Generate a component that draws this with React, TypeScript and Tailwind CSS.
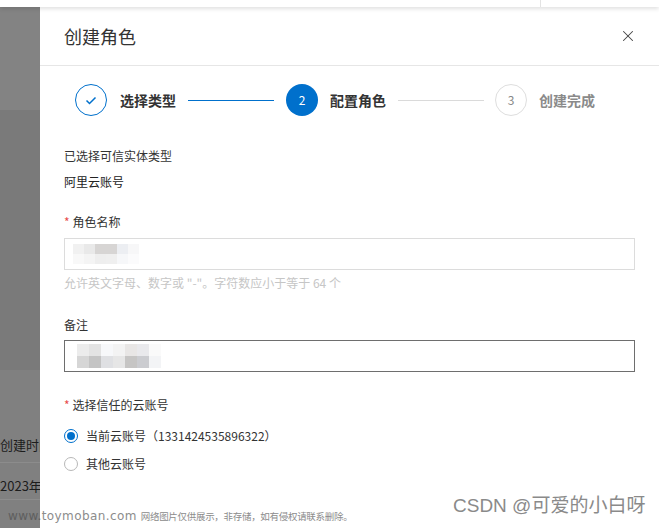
import { X } from "lucide-react";

const mosaicName = [
  ["#f1f1f1", "#e9e9e9", "#d7d5d4", "#d7d5d4", "#eceef2", "#f7f7f8"],
  ["#f8f8f8", "#f4f4f4", "#eeeeee", "#efefef", "#f6f7f9", "#fbfbfc"],
];

const mosaicNote = [
  ["#ececec", "#e3e3e3", "#f7f8fa", "#f3f3f3", "#e8e6e5", "#e9e9ec", "#fafafa"],
  ["#d6d6d6", "#c4c4c4", "#dfe0e3", "#e6e6e6", "#c6c5c4", "#cbccd0", "#f3f4f6"],
];

function Mosaic({ rows, cell }: { rows: string[][]; cell: string }) {
  return (
    <div className="flex flex-col">
      {rows.map((row, r) => (
        <div key={r} className="flex">
          {row.map((c, i) => (
            <div key={i} className={cell} style={{ backgroundColor: c }} />
          ))}
        </div>
      ))}
    </div>
  );
}

function Label({ text, required }: { text: string; required?: boolean }) {
  return (
    <div className="h-[18px] text-[12px] leading-[18px] text-[#333]">
      {required && <span className="mr-[3px] text-[#e84c4c]">*</span>}
      {text}
    </div>
  );
}

function Radio({ checked, label }: { checked?: boolean; label: string }) {
  return (
    <div className="flex h-[18px] items-center gap-2 text-[12px] leading-[18px] text-[#333]">
      {checked ? (
        <span className="flex h-[14px] w-[14px] items-center justify-center rounded-full border border-[#0070cc]">
          <span className="h-[8px] w-[8px] rounded-full bg-[#0070cc]" />
        </span>
      ) : (
        <span className="h-[14px] w-[14px] rounded-full border border-[#b8b8b8]" />
      )}
      <span>{label}</span>
    </div>
  );
}

export default function App() {
  return (
    <div className="relative h-[528px] w-[659px] overflow-hidden bg-white font-['Noto_Sans_CJK_SC','Noto_Sans',sans-serif]">
      {/* top bar of the page behind */}
      <div className="relative z-10 flex h-[7px] bg-white shadow-[0_2px_4px_rgba(0,0,0,0.12)]">
        <div className="w-[541px] border-r border-[#e3e3e3]" />
      </div>

      <div className="flex h-[521px]">
        {/* dimmed page behind the drawer */}
        <div className="flex w-[40px] flex-col overflow-hidden bg-[#808080] text-[13px] text-[#1c1c1c]">
          <div className="h-[103px] bg-[#838383]" />
          <div className="h-[260px] bg-[#7a7a7a]" />
          <div className="flex h-[93px] items-end whitespace-nowrap border-b border-[#8c8c8c] pb-[8px] leading-[18px]">
            创建时间
          </div>
          <div className="flex h-[37px] items-end whitespace-nowrap border-b border-[#8c8c8c] pb-[4px] leading-[18px]">
            2023年8
          </div>
        </div>

        {/* drawer */}
        <div className="flex-1 bg-white">
          <div className="flex h-[59px] items-center justify-between border-b border-[#e6e6e6] pl-6 pr-[22px]">
            <span className="text-[18px] text-[#333]">创建角色</span>
            <X size={18} strokeWidth={1.4} className="text-[#444]" />
          </div>

          {/* steps */}
          <div className="mt-[18px] flex h-[32px] items-center pl-[35px]">
            <div className="flex h-[32px] w-[32px] items-center justify-center rounded-full border border-[#0070cc]">
              <svg width="12" height="9" viewBox="0 0 12 9">
                <path d="M1.5 4.5 L4.5 7.5 L10.5 1.5" fill="none" stroke="#0070cc" strokeWidth="1.5" />
              </svg>
            </div>
            <span className="ml-[13px] text-[14px] font-bold text-[#333]">选择类型</span>
            <div className="ml-[12px] h-px w-[86px] bg-[#0070cc]" />
            <div className="ml-[12px] flex h-[32px] w-[32px] items-center justify-center rounded-full bg-[#0070cc] text-[12px] text-white">
              2
            </div>
            <span className="ml-[12px] text-[14px] font-bold text-[#333]">配置角色</span>
            <div className="ml-[12px] h-px w-[86px] bg-[#dadada]" />
            <div className="ml-[11px] flex h-[32px] w-[32px] items-center justify-center rounded-full border border-[#dedede] text-[12px] text-[#888]">
              3
            </div>
            <span className="ml-[12px] text-[14px] font-bold text-[#8a8a8a]">创建完成</span>
          </div>

          {/* form */}
          <div className="flex flex-col px-6 pt-[31px]">
            <Label text="已选择可信实体类型" />
            <div className="mt-[8px] h-[18px] text-[12px] leading-[18px] text-[#222]">阿里云账号</div>

            <div className="mt-[22px]">
              <Label text="角色名称" required />
            </div>
            <div className="mt-[7px] flex h-[32px] items-center border border-[#dcdcdc] pl-[8px]">
              <Mosaic rows={mosaicName} cell="h-[10px] w-[11px]" />
            </div>
            <div className="mt-[4px] h-[18px] text-[12px] leading-[18px] text-[#c6c6c6]">
              允许英文字母、数字或 "-"。字符数应小于等于 64 个
            </div>

            <div className="mt-[24px]">
              <Label text="备注" />
            </div>
            <div className="mt-[6px] flex h-[32px] items-center border border-[#6e6e6e] pl-[12px]">
              <Mosaic rows={mosaicNote} cell="h-[12px] w-[12px]" />
            </div>

            <div className="mt-[24px]">
              <Label text="选择信任的云账号" required />
            </div>
            <div className="mt-[13px]">
              <Radio checked label="当前云账号（1331424535896322）" />
            </div>
            <div className="mt-[10px]">
              <Radio label="其他云账号" />
            </div>
          </div>
        </div>
      </div>

      {/* watermarks */}
      <div className="absolute bottom-[3px] left-[8px] flex items-baseline whitespace-nowrap text-[#8c8c8c]">
        <span className="font-['DejaVu_Sans',sans-serif] text-[12px] tracking-[0.4px]">
          <span className="text-[#5e5e5e]">www.</span>toymoban.com
        </span>
        <span className="ml-[4px] text-[9.5px] tracking-[-0.3px]">网络图片仅供展示，非存储，如有侵权请联系删除。</span>
      </div>
      <div className="absolute bottom-[8px] left-[453px] whitespace-nowrap text-[19px] text-[#8a8a8a] [text-shadow:0_0_1px_#fff]">
        <span className="font-['Liberation_Sans',sans-serif]">CSDN @</span>可爱的小白呀
      </div>
    </div>
  );
}
